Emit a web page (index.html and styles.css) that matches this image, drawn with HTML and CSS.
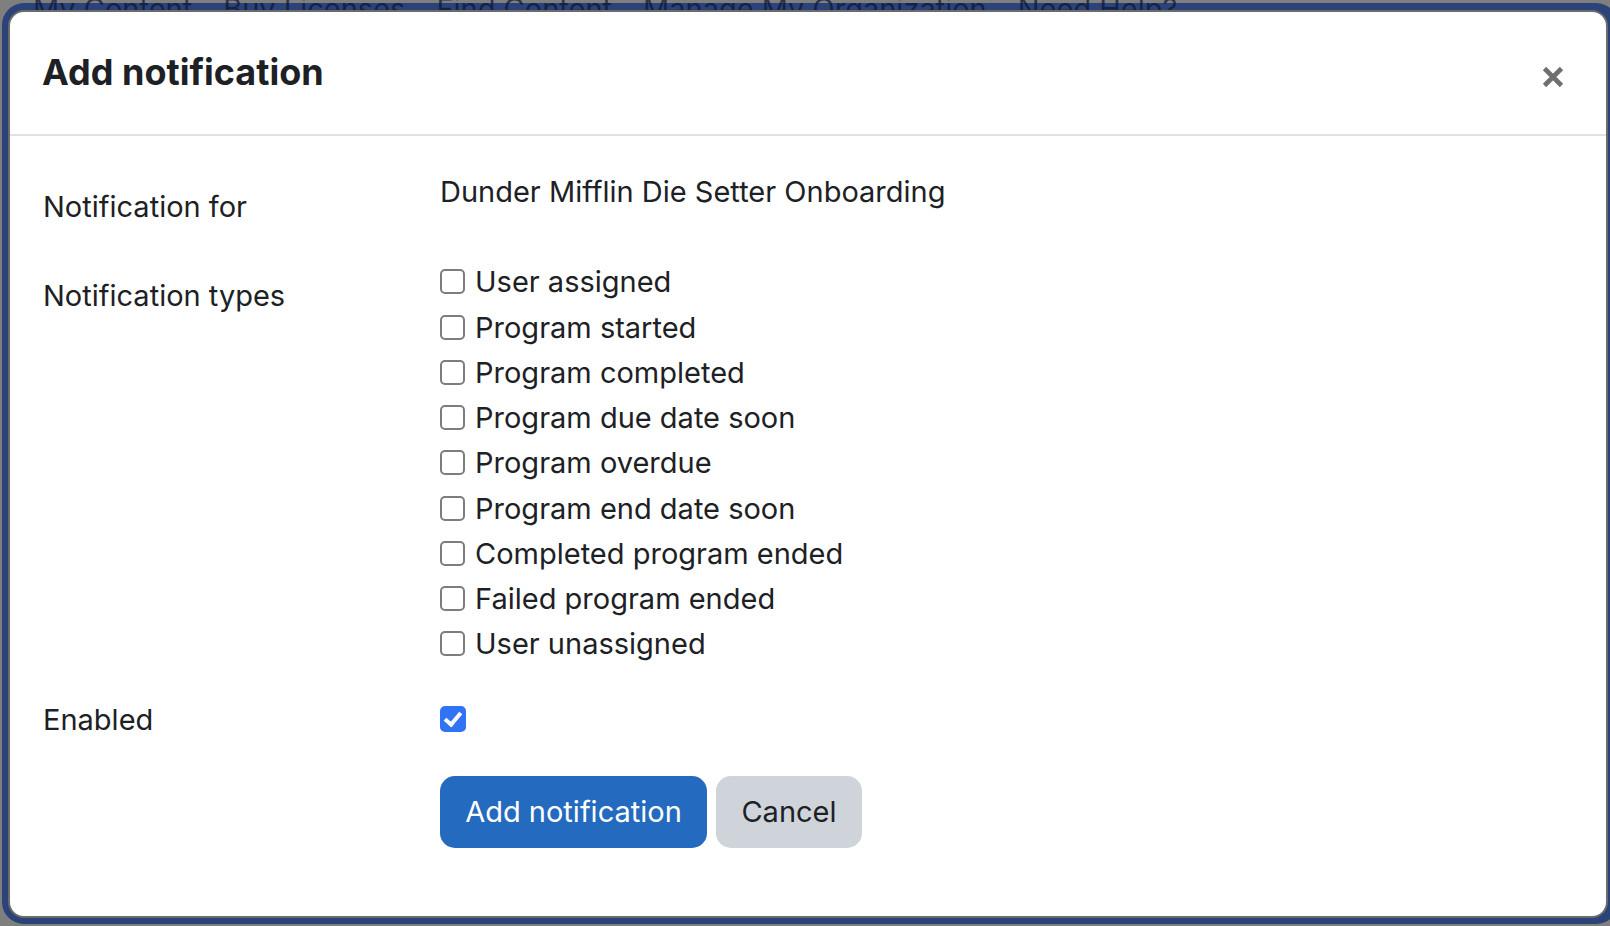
FILE: index.html
```html
<!DOCTYPE html>
<html lang="en">

<head>
    <meta charset="UTF-8" />
    <meta name="viewport" content="width=device-width, initial-scale=1.0" />
    <title>Add notification</title>
    <link rel="stylesheet" href="styles.css">
</head>

<body>
    <nav class="page-nav">
        <span>My Content</span>
        <span>Buy Licenses</span>
        <span>Find Content</span>
        <span>Manage My Organization</span>
        <span>Need Help?</span>
    </nav>
    <div class="backdrop-frame">
        <div class="modal">
            <div class="modal-header">
                <h5 class="modal-title">Add notification</h5>
                <button class="close" type="button" aria-label="Close">
                    <svg width="22" height="22" viewBox="0 0 22 22">
                        <path d="M2.5 2.5 L19.5 19.5 M19.5 2.5 L2.5 19.5" stroke="#6f6f6f" stroke-width="4.6" />
                    </svg>
                </button>
            </div>
            <div class="modal-body">
                <form class="mform">
                    <div class="form-row row-static">
                        <div class="col-label">Notification for</div>
                        <div class="col-value">Dunder Mifflin Die Setter Onboarding</div>
                    </div>
                    <div class="form-row row-types">
                        <div class="col-label">Notification types</div>
                        <div class="col-value">
                            <label class="check"><input type="checkbox"> User assigned</label>
                            <label class="check"><input type="checkbox"> Program started</label>
                            <label class="check"><input type="checkbox"> Program completed</label>
                            <label class="check"><input type="checkbox"> Program due date soon</label>
                            <label class="check"><input type="checkbox"> Program overdue</label>
                            <label class="check"><input type="checkbox"> Program end date soon</label>
                            <label class="check"><input type="checkbox"> Completed program ended</label>
                            <label class="check"><input type="checkbox"> Failed program ended</label>
                            <label class="check"><input type="checkbox"> User unassigned</label>
                        </div>
                    </div>
                    <div class="form-row row-enabled">
                        <div class="col-label">Enabled</div>
                        <div class="col-value">
                            <label class="check"><input type="checkbox" checked></label>
                        </div>
                    </div>
                    <div class="form-row row-actions">
                        <div class="col-label"></div>
                        <div class="col-value actions">
                            <button class="btn btn-primary" type="submit">Add notification</button>
                            <button class="btn btn-secondary" type="button">Cancel</button>
                        </div>
                    </div>
                </form>
            </div>
        </div>
    </div>
</body>

</html>
```

FILE: styles.css
```css
body {
    margin: 0;
    height: 926px;
    box-sizing: border-box;
    padding: 3px 0 0 2px;
    overflow: hidden;
    position: relative;
    background-color: #7f7f7f;
    color: #1d2125;
    font-family: Inter, "Noto Sans", sans-serif;
}

.page-nav {
    position: absolute;
    z-index: 1;
    top: -6px;
    left: 33px;
    display: flex;
    gap: 31px;
    font-size: 29px;
    line-height: 30px;
    color: rgba(12, 22, 52, 0.72);
    white-space: nowrap;
}

.backdrop-frame {
    width: 1616px;
    height: 921px;
    box-sizing: border-box;
    padding: 7px 0 6px 6px;
    background-color: #2b4379;
    border-radius: 22px;
}

.modal {
    position: relative;
    z-index: 2;
    width: 1600px;
    height: 908px;
    box-sizing: border-box;
    border: 2px solid #6b6b6b;
    border-radius: 16px;
    background-color: #fff;
}

.modal-header {
    display: flex;
    align-items: center;
    justify-content: space-between;
    height: 124px;
    box-sizing: border-box;
    padding: 0 42px 0 32px;
    border-bottom: 2px solid #dee2e6;
}

.modal-title {
    margin: 0;
    font-size: 36px;
    font-weight: 700;
    line-height: 1.2;
}

.close {
    width: 22px;
    height: 22px;
    margin-top: 8px;
    padding: 0;
    border: none;
    background: none;
    cursor: pointer;
}

.close svg {
    display: block;
}

.modal-body {
    padding: 33px 33px;
}

.form-row {
    display: grid;
    grid-template-columns: 397px 1fr;
    margin-bottom: 30px;
    font-size: 29px;
    line-height: 45.25px;
}

.row-static .col-label {
    padding-top: 15px;
}

.row-types .col-label {
    padding-top: 14px;
}

.row-enabled {
    margin-bottom: 34px;
}

.check {
    display: flex;
    align-items: center;
    gap: 10px;
    height: 45.25px;
}

.check input {
    appearance: none;
    position: relative;
    flex: none;
    width: 25px;
    height: 25px;
    margin: 0;
    box-sizing: border-box;
    border: 2px solid #7d7d7d;
    border-radius: 5px;
    background-color: #fff;
}

.check input:checked {
    width: 26px;
    height: 26px;
    border-color: #3173f5;
    background-color: #3173f5;
}

.check input:checked::after {
    content: "";
    position: absolute;
    left: 6px;
    top: 1px;
    width: 6px;
    height: 13px;
    border: solid #fff;
    border-width: 0 4px 4px 0;
    transform: rotate(40deg);
}

.actions {
    display: flex;
    gap: 9px;
}

.btn {
    height: 72px;
    padding: 0;
    border: none;
    border-radius: 15px;
    font-family: inherit;
    font-size: 29px;
    cursor: pointer;
}

.btn-primary {
    width: 267px;
    background-color: #246abe;
    color: #fff;
}

.btn-secondary {
    width: 146px;
    background-color: #ced4da;
    color: #1d2125;
}
```
